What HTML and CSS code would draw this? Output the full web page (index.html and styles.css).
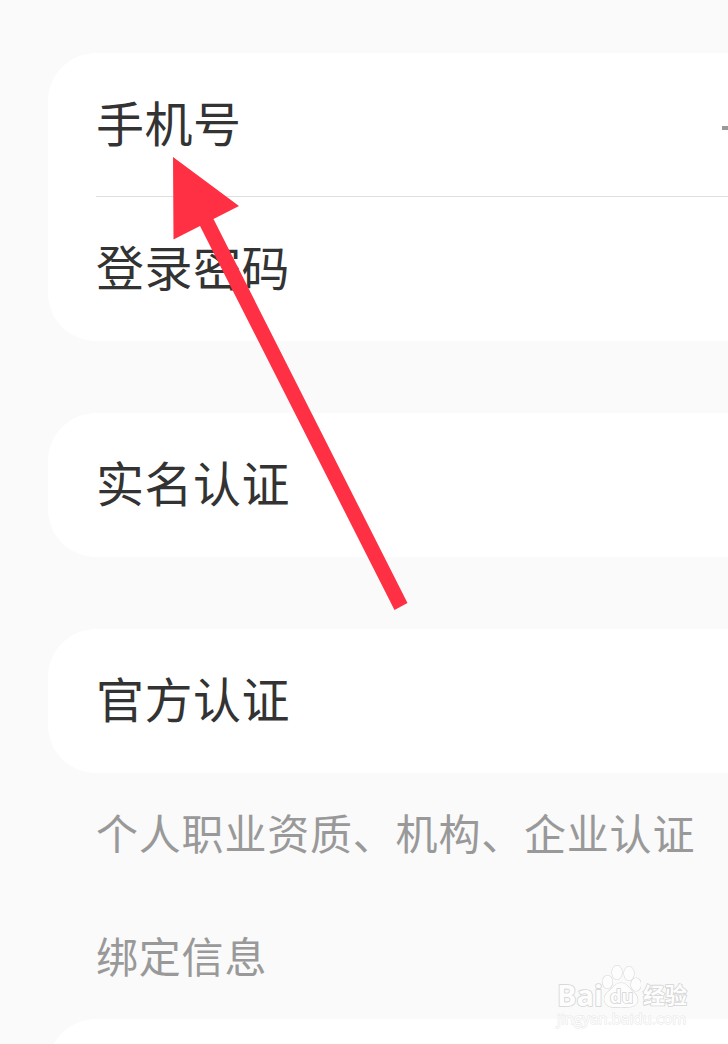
FILE: index.html
```html
<!DOCTYPE html>
<html lang="zh-CN">
<head>
    <meta charset="UTF-8">
    <meta name="viewport" content="width=device-width, initial-scale=1.0">
    <title>账号与安全</title>
    <link rel="stylesheet" href="styles.css">
</head>
<body>
    <div class="settings">
        <div class="card">
            <div class="row">
                <span class="label">手机号</span>
                <span class="value"></span>
            </div>
            <div class="row divided">
                <span class="label">登录密码</span>
            </div>
        </div>

        <div class="card">
            <div class="row">
                <span class="label">实名认证</span>
            </div>
        </div>

        <div class="card">
            <div class="row">
                <span class="label">官方认证</span>
            </div>
        </div>

        <p class="note">个人职业资质、机构、企业认证</p>
        <h2 class="section-title">绑定信息</h2>

        <div class="card">
            <div class="row"></div>
        </div>
    </div>

    <!-- Arrow pointing at the phone number row -->
    <svg class="arrow" width="236" height="456" viewBox="0 0 236 456" fill="#ff3044">
        <path d="M0 0 L66 49 L40.500 62 L234.500 446 L221.500 453 L27 69 L0.500 82.500 Z"/>
    </svg>

    <div class="watermark">
        <div class="brand">
            <span class="brand-text">Bai</span>
            <span class="paw">
                <svg width="40" height="43" viewBox="0 0 40 43" fill="#fdfdfd" stroke="#d9d9d9" stroke-width="1.200">
                    <ellipse cx="6.500" cy="17" rx="5" ry="6.500"/>
                    <ellipse cx="16" cy="7.500" rx="5" ry="7"/>
                    <ellipse cx="28" cy="8.500" rx="5" ry="7"/>
                    <ellipse cx="35" cy="19.500" rx="5" ry="6.500"/>
                    <path d="M20 18 C14 18 12 23 8 26 C3 30 2 35 5 39 C8 43 14 42 20 42 C26 42 33 43 36 38 C38 33 35 29 31 26 C27 22 26 18 20 18 Z"/>
                </svg>
                <span class="paw-text">du</span>
            </span>
            <span class="brand-text cn">经验</span>
        </div>
        <div class="site">jingyan.baidu.com</div>
    </div>
</body>
</html>
```
FILE: styles.css
```css
* {
    margin: 0;
    padding: 0;
    box-sizing: border-box;
}

body {
    position: relative;
    height: 1044px;
    background: #fafafa;
    color: #333333;
    font-family: "Noto Sans CJK SC", "Noto Sans", sans-serif;
}

.settings {
    height: 1044px;
    padding: 53px 0 0 48px;
    overflow: hidden;
}

/* Cards run past the right edge of the screen */
.card {
    margin-bottom: 72px;
    padding-left: 48px;
    background: #ffffff;
    border-radius: 48px 0 0 48px;
}

.row {
    display: flex;
    align-items: center;
    justify-content: space-between;
    height: 144px;
}

.divided {
    border-top: 1px solid #dedede;
    margin-top: -1px;
    height: 145px;
}

.label {
    padding: 0 0 9px;
    font-size: 48px;
    line-height: 72px;
    letter-spacing: 0.5px;
}

.value {
    width: 6px;
    height: 4px;
    margin-top: 6px;
    background: #999999;
}

.note,
.section-title {
    padding-left: 48px;
    color: #999999;
    font-size: 42px;
    font-weight: 400;
    line-height: 62px;
    letter-spacing: 0.8px;
    white-space: nowrap;
}

.note {
    margin-top: -44px;
}

.section-title {
    margin: 61px 0 33px;
}

.arrow {
    position: absolute;
    left: 173px;
    top: 157px;
}

.watermark {
    position: absolute;
    left: 557px;
    top: 965px;
    width: 132px;
    color: #fdfdfd;
    -webkit-text-stroke: 1.6px #d4d4d4;
    paint-order: stroke fill;
}

.brand {
    display: flex;
    align-items: flex-end;
    height: 43px;
}

.brand-text {
    width: 44px;
    font-family: "Open Sans", sans-serif;
    font-size: 29px;
    font-weight: 700;
    line-height: 27px;
}

.cn {
    width: auto;
    margin-left: 2px;
    font-family: "Noto Sans CJK SC", sans-serif;
    font-size: 22px;
    line-height: 29px;
}

.paw {
    position: relative;
    height: 43px;
}

.paw-text {
    position: absolute;
    left: 9px;
    bottom: 2px;
    font-family: "Open Sans", sans-serif;
    font-size: 18px;
    font-weight: 700;
    line-height: 20px;
}

.site {
    font-family: "Open Sans", sans-serif;
    font-size: 15px;
    line-height: 20px;
    letter-spacing: 0.1px;
    -webkit-text-stroke: 1px #e6e6e6;
}
```
